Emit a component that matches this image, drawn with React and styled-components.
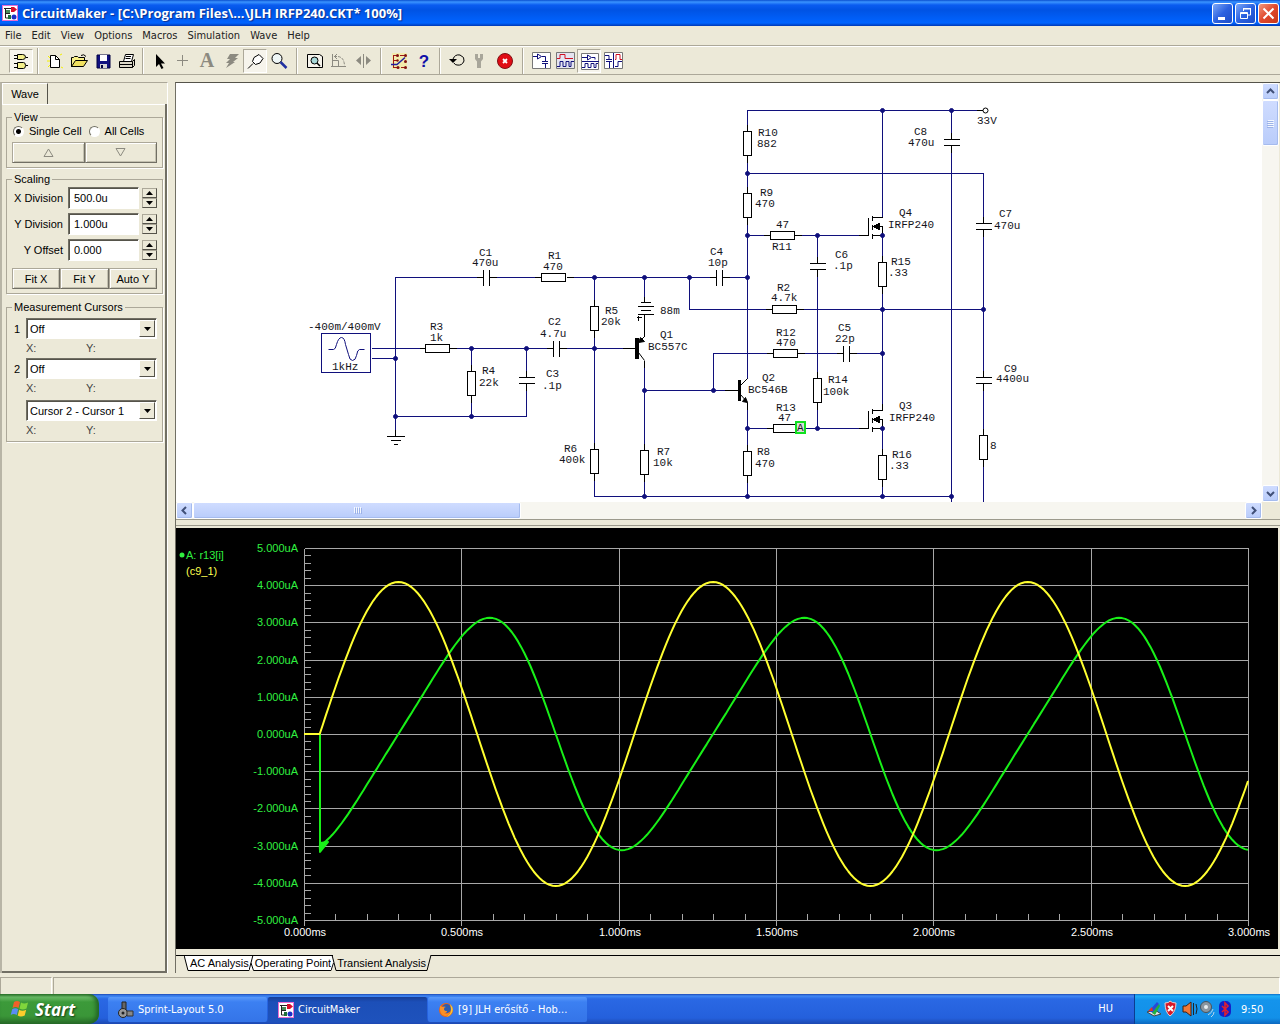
import React, { useState } from "react";
import styled, { createGlobalStyle, css } from "styled-components";

const GlobalStyle = createGlobalStyle`
  * {
    box-sizing: border-box;
  }
  body {
    margin: 0;
    background: #ece9d8;
    font-family: "Liberation Sans", Arial, sans-serif;
    font-size: 11px;
    color: #000;
  }
  button,
  input,
  select {
    font: inherit;
    color: inherit;
    margin: 0;
  }
`;

const NAVY = "#10107c";

/* ---------- logos ---------- */

const CircuitLogo = () => (
  <svg width="16" height="16" viewBox="0 0 16 16" aria-hidden="true">
    <rect width="16" height="16" fill="#e86cd0" />
    <rect x="1" y="1" width="14" height="14" fill="#fff" />
    <path d="M2 3.500h8M3.500 3v10h3M4 8.500h4" stroke="#222" fill="none" />
    <path d="M4 5h4v3H4z" fill="#4a8a5a" />
    <path d="M9 2h3l3 2.500L12 7H9z" fill="#d8102c" />
    <circle cx="12" cy="12" r="2.500" fill="#1a30c8" />
    <path d="M6 10h3v4H6z" fill="#1d7038" />
  </svg>
);

const WindowsFlag = () => (
  <svg width="20" height="20" viewBox="0 0 20 20" aria-hidden="true">
    <path d="M4 3q3-2 6 0L8.500 9q-3-2-6 0z" fill="#f2602a" />
    <path d="M11 3.500q3 2 7 0L16.500 9.500q-4 2-7 0z" fill="#7fd63c" />
    <path d="M2.200 10.200q3-2 6 0L6.700 16q-3-2-6 0z" fill="#5a8cf5" />
    <path d="M9.200 10.700q3 2 7 0L14.700 16.500q-4 2-7 0z" fill="#fccd2c" />
  </svg>
);

const SprintLogo = () => (
  <svg width="16" height="18" viewBox="0 0 16 18" aria-hidden="true">
    <path d="M4 1h4v9H4z" fill="#666" stroke="#222" />
    <circle cx="5" cy="12" r="4.500" fill="#999" stroke="#222" />
    <circle cx="5" cy="12" r="1.500" fill="#222" />
    <path d="M9 10h6v5H9z" fill="#888" stroke="#333" />
  </svg>
);

const FoxLogo = () => (
  <svg width="16" height="16" viewBox="0 0 16 16" aria-hidden="true">
    <circle cx="8" cy="8" r="7" fill="#e8641a" />
    <circle cx="8.500" cy="6.500" r="4.500" fill="#2c5cb0" />
    <path d="M2 4q1 0 2 1 2-1 4 0-2 0-2 2 0 2 3 2 0 2-3 2 3 2 6-1-1 4-5 4-6-1-5-10z" fill="#f89028" />
    <path d="M12 2q5 5 1 10-2 3-5 3 5-3 5-7 0-3-1-6z" fill="#f8c838" />
  </svg>
);

/* ---------- title bar ---------- */

const TitleBar = styled.header`
  display: flex;
  align-items: center;
  height: 26px;
  padding: 0 1px 0 2px;
  gap: 4px;
  background: linear-gradient(#0a4fd0 0, #3a94ff 2px, #0a5cf0 5px, #0053e4 10px, #0060fa 20px, #0064ff 23px, #0038b4 26px);
`;

const TitleText = styled.h1`
  flex: 1;
  margin: 0;
  color: #fff;
  font-family: "Open Sans", sans-serif;
  font-size: 13px;
  font-weight: 700;
  white-space: nowrap;
  text-shadow: 1px 1px 1px #10308c;
`;

const WindowButtons = styled.div`
  display: flex;
  gap: 2px;
`;

const WindowButton = styled.button`
  display: flex;
  width: 21px;
  height: 21px;
  padding: 0;
  border: 1px solid #fff;
  border-radius: 3px;
  background: ${({ $close }) =>
    $close
      ? "linear-gradient(135deg, #f0987c, #e0482c 50%, #c8381a)"
      : "linear-gradient(135deg, #7ca8f8, #2c62e0 50%, #1c4cc8)"};
`;

/* ---------- menu ---------- */

const MenuBar = styled.nav`
  display: flex;
  align-items: center;
  gap: 10px;
  height: 20px;
  padding: 0 5px 1px;
  border-bottom: 1px solid #aca899;
`;

const MenuItem = styled.a`
  color: #222;
  text-decoration: none;
  font-family: "DejaVu Sans Condensed", "DejaVu Sans", sans-serif;
  font-size: 11px;
`;

const menus = ["File", "Edit", "View", "Options", "Macros", "Simulation", "Wave", "Help"];

/* ---------- tool bar ---------- */

const ToolBar = styled.div`
  display: flex;
  align-items: center;
  height: 29px;
  padding: 0 9px;
  border-top: 1px solid #fff;
  border-bottom: 1px solid #aca899;
`;

const ToolButton = styled.button`
  width: 24px;
  height: 24px;
  padding: 0;
  border: 1px solid transparent;
  background: none;
  ${({ $pressed }) =>
    $pressed &&
    css`
      border-color: #aca899 #fff #fff #aca899;
      background: #f6f4ec;
    `}
  svg {
    display: block;
    overflow: visible;
  }
`;

const Separator = styled.span`
  width: 2px;
  height: 26px;
  margin: 0 ${({ $space }) => $space}px;
  border-left: 1px solid #aca899;
  border-right: 1px solid #fff;
`;

const toolGroups = [
  {
    space: 4,
    tools: [
      {
        name: "Parts",
        pressed: true,
        art: (
          <g fill="#f4f08c" stroke="#000">
            <path d="M7.500 4.500h5q3 0 3 2.500t-3 2.500h-5z" />
            <path d="M4 5.500h3M4 8.500h3M16 7.500h2M4 13.500h3M4 17.500h3M16 15.500h2" />
            <path d="M7.500 12.500h6q2 0 2 3t-2 3h-6z" />
          </g>
        ),
      },
    ],
  },
  {
    space: 3,
    tools: [
      {
        name: "New",
        art: (
          <g>
            <path d="M4 6l2 2M3 11h3M4 17l2-2M16 5l2-1M17 17l2 1" stroke="#f4f000" />
            <path d="M6.500 5.500h5l4 4v8h-9z" fill="#fff" stroke="#000" />
            <path d="M11.500 5.500v4h4" fill="none" stroke="#000" />
          </g>
        ),
      },
      {
        name: "Open",
        art: (
          <g stroke="#000">
            <path d="M3.500 17V7.500h2l1-1h3l1 1h6v3" fill="#f8f088" />
            <path d="M3.500 16.500l4-6h12l-4 6z" fill="#f0e060" />
            <path d="M13 5.500q3-2 5 1" fill="none" />
          </g>
        ),
      },
      {
        name: "Save",
        art: (
          <g>
            <path d="M5 5h13v13H5z" fill="#101080" stroke="#000040" />
            <path d="M8 5h7v6H8z" fill="#fff" />
            <path d="M8 14h7v4H8z" fill="#d4d4d4" />
            <path d="M9 15h2v3H9z" fill="#000040" />
          </g>
        ),
      },
      {
        name: "Print",
        art: (
          <g stroke="#000" fill="#fff">
            <path d="M7.500 11.500l2-7h8l-2 7z" />
            <path d="M10 6.500h5M9.500 8.500h5" />
            <path d="M3.500 11.500h13l2-2v6l-2 2h-13z" fill="#dedaca" />
            <path d="M3.500 14.500h13M16.500 11.500v6" />
          </g>
        ),
      },
    ],
  },
  {
    space: 5,
    tools: [
      { name: "Arrow", art: <path d="M8 4v13l3-3 2.500 5 2-1-2.500-4.500h4z" fill="#000" /> },
      { name: "Wire", art: <path d="M10.500 5v11M5 10.500h11" stroke="#8c8a80" /> },
      {
        name: "Text",
        art: (
          <text x="11" y="17" textAnchor="middle" fontFamily="Liberation Serif, serif" fontSize="20" fontWeight="700" fill="#8c8a80">
            A
          </text>
        ),
      },
      { name: "Delete", art: <path d="M10 4h9l-4 4h3l-5 4h2l-9 6 3-5H6l4-4H7z" fill="#8c8a80" /> },
      {
        name: "Probe",
        pressed: true,
        art: <path d="M4 18.500l5-5M8.500 11.500l3 3 4.500-1.500 3-4.500-4-4-5 3z" fill="#fff" stroke="#000" />,
      },
      {
        name: "Zoom",
        art: (
          <g>
            <circle cx="9" cy="8.500" r="5" fill="#eef6f6" stroke="#000" />
            <path d="M12.500 12l6 6" stroke="#2030a0" strokeWidth="2.500" />
          </g>
        ),
      },
    ],
  },
  {
    space: 5,
    tools: [
      {
        name: "Fit to window",
        art: (
          <g stroke="#000" fill="none">
            <path d="M3.500 4.500h12l3 2v11h-15z" fill="#f6f4ec" />
            <circle cx="10.500" cy="10.500" r="3.500" fill="#a8d8d8" />
            <path d="M13 13l3 3" strokeWidth="1.500" />
          </g>
        ),
      },
      {
        name: "Rotate",
        art: (
          <g stroke="#8c8a80" fill="none">
            <path d="M4.500 4v13M3 16.500h15" />
            <path d="M5 10.500h5.500V16" />
            <path d="M6 6.500h3q7 0 7.500 9" strokeDasharray="3 1" />
            <path d="M9 4L6.500 6.500 9 9" />
          </g>
        ),
      },
      {
        name: "Mirror",
        art: (
          <g fill="#8c8a80">
            <path d="M9 6v9l-5-4.500zM14 6v9l5-4.500z" />
            <path d="M11 4h1v14h-1z" />
          </g>
        ),
      },
    ],
  },
  {
    space: 4,
    tools: [
      {
        name: "Trace",
        art: (
          <g>
            <path d="M4 3h15v16H4z" fill="#f8ec90" opacity=".6" />
            <path d="M5.500 6v11M5 5.500h5M12 5.500h5M5 10.500h4M5 17.500h5M13 17.500h4" stroke="#a01818" fill="none" />
            <path d="M3 14.500h6l8-7" stroke="#2020a0" strokeWidth="1.500" fill="none" />
            <g fill="#801010">
              <circle cx="9.500" cy="5.500" r="1.500" />
              <circle cx="17.500" cy="5.500" r="1.500" />
              <circle cx="9.500" cy="10.500" r="1.200" />
              <circle cx="17.500" cy="11.500" r="1.500" />
              <circle cx="10" cy="17.500" r="1.500" />
              <circle cx="17.500" cy="17.500" r="1.500" />
            </g>
          </g>
        ),
      },
      {
        name: "Help",
        art: (
          <text x="12" y="17" textAnchor="middle" fontFamily="Liberation Sans, sans-serif" fontSize="17" fontWeight="700" fill="#1010a8">
            ?
          </text>
        ),
      },
    ],
  },
  {
    space: 5,
    tools: [
      {
        name: "Reset",
        art: (
          <g>
            <path d="M7 9q2-5 7-4 5 2 4 6-2 5-7 4-2 0-3-2" fill="none" stroke="#000" />
            <path d="M3 9h8l-4 4z" fill="#000" />
          </g>
        ),
      },
      {
        name: "Setup",
        art: <path d="M5 4h3v4h2V4h3v5l-2 2.500V18H7v-6.500L5 9z" fill="#a8a69a" />,
      },
      {
        name: "Stop",
        art: (
          <g>
            <circle cx="11" cy="11" r="7.500" fill="#e00c14" stroke="#801014" />
            <path d="M9 9l4 4M13 9l-4 4" stroke="#fff" strokeWidth="1.800" />
          </g>
        ),
      },
    ],
  },
  {
    tools: [
      {
        name: "Schematic",
        art: (
          <g fill="none" stroke={NAVY}>
            <path d="M2.500 2.500h18v16h-18z" fill="#fff" stroke="#777" />
            <path d="M3 6.500h4M7.500 4v5l4-2.500zM12 6.500h3.500V11M12 11.500h6M12 13.500h6M15.500 14v4" />
          </g>
        ),
      },
      {
        name: "Waveforms",
        art: (
          <g fill="none" stroke={NAVY}>
            <path d="M2.500 2.500h18v16h-18z" fill="#e4e4f0" stroke="#777" />
            <path d="M3 8.500h3v-4h5v4h8" stroke="#d01020" />
            <path d="M3 16.500h3v-5h3v5h3v-5h3v5h2v-5h3" />
          </g>
        ),
      },
      {
        name: "Split horizontal",
        pressed: true,
        art: (
          <g fill="none" stroke={NAVY}>
            <path d="M3.500 3.500h17v16h-17z" fill="#fff" stroke="#777" />
            <path d="M4 7.500h5M9.500 5v5l4-2.500zM14 7.500h3v2M4 11.500h17" />
            <path d="M4 17.500h3v-4h3v4h3v-4h3v4h2v-4h2" />
          </g>
        ),
      },
      {
        name: "Split vertical",
        art: (
          <g fill="none" stroke={NAVY}>
            <path d="M2.500 2.500h18v16h-18z" fill="#fff" stroke="#777" />
            <path d="M3 5.500h4V9M4 9.500h6M4 11.500h6M7.500 12v6M11.500 3v15" />
            <path d="M13 9.500h1v-5h4v5h2" stroke="#d01020" />
            <path d="M13 16.500h3v-5h4" />
          </g>
        ),
      },
    ],
  },
];

/* ---------- side panel ---------- */

const Workspace = styled.div`
  flex: 1;
  display: grid;
  grid-template-columns: 168px minmax(0, 1fr);
  column-gap: 7px;
  margin-top: 7px;
`;

const Sidebar = styled.aside`
  display: flex;
  flex-direction: column;
  border-top: 1px solid #aca899;
  border-left: 2px solid #b8b5a6;
  border-right: 1px solid #fff;
`;

const WaveTab = styled.button`
  width: 46px;
  height: 21px;
  padding: 0;
  border: 1px solid #fff;
  border-right: 1px solid #55534a;
  border-bottom: 0;
  background: none;
`;

const Panel = styled.div`
  flex: 1;
  padding: 6px 2px 6px 4px;
  border-right: 2px solid #716f64;
  border-bottom: 2px solid #716f64;
  box-shadow: inset 0 1px 0 #fff;
`;

const Group = styled.fieldset`
  min-width: 0;
  margin: 0 0 ${({ $after }) => $after}px;
  padding: ${({ $top }) => $top}px 5px 4px;
  border: 1px solid #aca899;
  box-shadow: 1px 1px 0 #fff;
  legend {
    height: 14px;
    padding: 0 2px;
    line-height: 14px;
  }
`;

const RadioRow = styled.div`
  display: flex;
  gap: 7px;
  height: 14px;
  padding-left: 1px;
  margin-bottom: 4px;
`;

const RadioLabel = styled.label`
  display: flex;
  align-items: center;
  gap: 5px;
  white-space: nowrap;
  input {
    appearance: none;
    width: 11px;
    height: 11px;
    border: 1px solid;
    border-color: #716f64 #fff #fff #716f64;
    border-radius: 50%;
    background: #fff;
  }
  input:checked {
    background: radial-gradient(circle, #000 2px, #fff 3px);
  }
`;

const ButtonRow = styled.div`
  display: flex;
`;

const PushButton = styled.button`
  flex: 1;
  display: flex;
  align-items: center;
  justify-content: center;
  height: 21px;
  padding: 0;
  white-space: nowrap;
  border: 1px solid;
  border-color: #aca899 #716f64 #716f64 #aca899;
  background: #ece9d8;
  box-shadow: inset 1px 1px 0 #fff, inset -1px -1px 0 #c4c1b0;
`;

const FieldRow = styled.div`
  display: grid;
  grid-template-columns: 1fr 71px 15px;
  align-items: center;
  column-gap: 3px;
  height: 22px;
  margin-bottom: 4px;
  label {
    padding-right: 2px;
    text-align: right;
    white-space: nowrap;
  }
`;

const sunken = css`
  border: 1px solid;
  border-color: #716f64 #fff #fff #716f64;
  box-shadow: inset 1px 1px 0 #55534a;
  background: #fff;
`;

const TextBox = styled.input`
  ${sunken}
  width: 100%;
  height: 22px;
  padding: 0 5px;
  border-radius: 0;
`;

const Spinner = styled.div`
  display: flex;
  flex-direction: column;
`;

const SpinButton = styled.button`
  display: flex;
  align-items: center;
  justify-content: center;
  height: 10px;
  padding: 0;
  border: 1px solid;
  border-color: #aca899 #55534a #55534a #aca899;
  background: #ece9d8;
`;

const FitRow = styled(ButtonRow)`
  margin-top: 7px;
`;

const CursorRow = styled.div`
  display: grid;
  grid-template-columns: 14px 1fr;
  align-items: center;
  label {
    padding-left: 2px;
  }
`;

const ComboBox = styled.div`
  ${sunken}
  grid-column: 2;
  display: flex;
  height: 21px;
  padding: 1px;
  select {
    flex: 1;
    min-width: 0;
    padding: 0 2px;
    border: 0;
    appearance: none;
    background: #fff;
  }
`;

const ComboArrow = styled.span`
  display: flex;
  align-items: center;
  justify-content: center;
  width: 16px;
  border: 1px solid;
  border-color: #fff #55534a #55534a #fff;
  background: #ece9d8;
  pointer-events: none;
`;

const Readout = styled.div`
  display: grid;
  grid-template-columns: 60px 1fr;
  height: ${({ $height }) => $height}px;
  padding-left: 14px;
  line-height: 18px;
  color: #444;
`;

const Triangle = ({ down, small }) => (
  <svg width={small ? 7 : 11} height={small ? 4 : 9} viewBox={small ? "0 0 7 4" : "0 0 11 9"} aria-hidden="true">
    {small ? (
      <path d={down ? "M0 0h7L3.500 4z" : "M0 4h7L3.500 0z"} fill="#000" />
    ) : (
      <path d={down ? "M1 .500h9L5.500 8z" : "M1 8.500h9L5.500 1z"} fill="none" stroke="#8c8a80" />
    )}
  </svg>
);

const NumberField = ({ id, label, initial }) => (
  <FieldRow>
    <label htmlFor={id}>{label}</label>
    <TextBox id={id} defaultValue={initial} />
    <Spinner>
      <SpinButton aria-label={`${label} up`}>
        <Triangle small />
      </SpinButton>
      <SpinButton aria-label={`${label} down`}>
        <Triangle small down />
      </SpinButton>
    </Spinner>
  </FieldRow>
);

const CursorField = ({ id, label, value, height }) => (
  <>
    <CursorRow>
      {label && <label htmlFor={id}>{label}</label>}
      <ComboBox>
        <select id={id} aria-label={label ? undefined : "Cursor difference"}>
          <option>{value}</option>
        </select>
        <ComboArrow>
          <Triangle small down />
        </ComboArrow>
      </ComboBox>
    </CursorRow>
    <Readout $height={height}>
      <span>X:</span>
      <span>Y:</span>
    </Readout>
  </>
);

const SidePanel = () => {
  const [cells, setCells] = useState("single");
  return (
    <Sidebar>
      <WaveTab>Wave</WaveTab>
      <Panel>
        <Group $after={4} $top={0}>
          <legend>View</legend>
          <RadioRow>
            <RadioLabel>
              <input type="radio" name="cells" checked={cells === "single"} onChange={() => setCells("single")} />
              Single Cell
            </RadioLabel>
            <RadioLabel>
              <input type="radio" name="cells" checked={cells === "all"} onChange={() => setCells("all")} />
              All Cells
            </RadioLabel>
          </RadioRow>
          <ButtonRow>
            <PushButton aria-label="Previous cell">
              <Triangle />
            </PushButton>
            <PushButton aria-label="Next cell">
              <Triangle down />
            </PushButton>
          </ButtonRow>
        </Group>
        <Group $after={6} $top={1}>
          <legend>Scaling</legend>
          <NumberField id="xdiv" label="X Division" initial="500.0u" />
          <NumberField id="ydiv" label="Y Division" initial="1.000u" />
          <NumberField id="yoff" label="Y Offset" initial="0.000" />
          <FitRow>
            <PushButton>Fit X</PushButton>
            <PushButton>Fit Y</PushButton>
            <PushButton>Auto Y</PushButton>
          </FitRow>
        </Group>
        <Group $after={0} $top={4}>
          <legend>Measurement Cursors</legend>
          <CursorField id="cursor1" label="1" value="Off" height={19} />
          <CursorField id="cursor2" label="2" value="Off" height={21} />
          <CursorField id="diff" value="Cursor 2 - Cursor 1" height={16} />
        </Group>
      </Panel>
    </Sidebar>
  );
};

/* ---------- schematic ---------- */

const wires = [
  "M395 416V277H483M489 277H541M566 277H716M722 277H747",
  "M371 348H425M449 348H553M559 348H636M371 358H395M395 416V436M395 416H526V383M526 377V348",
  "M471 348V371M471 395V416M594 277V306M594 330V449M594 473V496H951",
  "M644 277V302M644 314V336M644 360V450M644 474V496M644 390H738M713 390V353H773",
  "M747 131V110H982M747 155V193M747 217V378M747 173H983V223M983 229V377M983 383V435M983 459V502",
  "M747 235H770M794 235H868M817 235V263M817 269V378M817 402V428",
  "M882 110V217M882 235V262M882 286V410M882 428V455M882 479V496",
  "M951 110V139M951 145V502M689 277V309H772M796 309H983",
  "M797 353H843M849 353H882M747 402V451M747 475V496M747 428H773M797 428H868",
];

const leads = [
  "M476 277H483M489 277H496M534 277H541M566 277H573M419 348H425M449 348H456M546 348H553M559 348H566",
  "M594 299V306M594 330V337M644 296V302M644 314V336M471 364V371M471 395V402M526 370V377M526 383V390",
  "M622 348H636M594 442V449M594 473V480M644 443V450M644 474V481M644 360V367M747 124V131M747 155V162",
  "M747 186V193M747 217V224M763 235H770M794 235H801M817 256V263M817 269V276M858 235H868M882 255V262",
  "M882 286V293M951 132V139M951 145V152M983 216V223M983 229V236M709 277H716M722 277H729M976 110H982",
  "M765 309H772M796 309H803M766 353H773M797 353H804M836 353H843M849 353H856M724 390H738M817 371V378",
  "M817 402V409M858 428H868M882 448V455M882 479V486M983 370V377M983 383V390M983 428V435M983 459V466",
  "M766 428H773M747 444V451M747 475V482M747 402V409M882 403V410M395 429V436",
];

const resistors = [
  [541, 273, 1], [425, 344, 1], [770, 231, 1], [772, 305, 1], [773, 349, 1], [773, 424, 1],
  [590, 306], [467, 371], [590, 449], [640, 450], [743, 131], [743, 193], [878, 262],
  [813, 378], [743, 451], [878, 455], [979, 435],
];

// centre of each capacitor; the last flag turns the plates upright
const capacitors = [
  [486, 277, 1], [556, 348, 1], [719, 277, 1], [846, 353, 1],
  [526, 380], [817, 266], [951, 142], [983, 226], [983, 380],
];

const junctions = [
  [594, 277], [644, 277], [689, 277], [747, 277], [471, 348], [526, 348], [594, 348], [395, 358],
  [395, 416], [471, 416], [644, 390], [713, 390], [644, 496], [747, 496], [882, 496], [951, 496],
  [747, 428], [817, 428], [882, 428], [882, 353], [882, 309], [983, 309], [882, 235], [817, 235],
  [747, 235], [747, 173], [882, 110], [951, 110],
];

const partLabels = [
  [479, 256, "C1"], [472, 266, "470u"], [548, 259, "R1"], [543, 270, "470"], [605, 314, "R5"],
  [601, 325, "20k"], [548, 325, "C2"], [540, 337, "4.7u"], [430, 330, "R3"], [430, 341, "1k"],
  [482, 374, "R4"], [479, 386, "22k"], [546, 377, "C3"], [542, 389, ".1p"], [308, 330, "-400m/400mV"],
  [332, 370, "1kHz"], [564, 452, "R6"], [559, 463, "400k"], [660, 314, "88m"], [660, 338, "Q1"],
  [648, 350, "BC557C"], [657, 455, "R7"], [653, 466, "10k"], [758, 136, "R10"], [757, 147, "882"],
  [760, 196, "R9"], [755, 207, "470"], [776, 228, "47"], [772, 250, "R11"], [710, 255, "C4"],
  [708, 266, "10p"], [835, 258, "C6"], [833, 269, ".1p"], [899, 216, "Q4"], [888, 228, "IRFP240"],
  [891, 265, "R15"], [888, 276, ".33"], [914, 135, "C8"], [908, 146, "470u"], [977, 124, "33V"],
  [999, 217, "C7"], [994, 229, "470u"], [777, 291, "R2"], [771, 301, "4.7k"], [776, 336, "R12"],
  [776, 346, "470"], [838, 331, "C5"], [835, 342, "22p"], [762, 381, "Q2"], [748, 393, "BC546B"],
  [828, 383, "R14"], [823, 395, "100k"], [776, 411, "R13"], [778, 421, "47"], [899, 409, "Q3"],
  [889, 421, "IRFP240"], [757, 455, "R8"], [755, 467, "470"], [892, 458, "R16"], [889, 469, ".33"],
  [1004, 372, "C9"], [996, 382, "4400u"], [990, 449, "8"],
];

const Mosfet = ({ y }) => (
  <g stroke="#000" fill="none">
    <path d={`M868 ${y}v-18M872 ${y - 20}v5M872 ${y - 11}v5M872 ${y - 2}v5M872 ${y - 18}h10M872 ${y - 9}h10v9h-10`} />
    <path d={`M873 ${y - 9}l6-3v6z`} fill="#000" />
  </g>
);

const CircuitView = styled.svg`
  display: block;
  width: 100%;
  height: 419px;
  background: #fff;
`;

const Schematic = () => (
  <CircuitView role="img" aria-label="Amplifier schematic">
    <g transform="translate(-175.5 -82.5)" fill="none" strokeWidth="1" shapeRendering="crispEdges">
      <path d={wires.join("")} stroke={NAVY} />
      <path d={leads.join("")} stroke="#000" />
      {resistors.map(([x, y, flat]) => (
        <rect key={`${x}-${y}`} x={x} y={y} width={flat ? 24 : 8} height={flat ? 8 : 24} fill="#fff" stroke="#000" />
      ))}
      {capacitors.map(([x, y, upright]) => (
        <path
          key={`${x}-${y}`}
          stroke="#000"
          d={upright ? `M${x - 3} ${y - 8}v16M${x + 3} ${y - 8}v16` : `M${x - 8} ${y - 3}h16M${x - 8} ${y + 3}h16`}
        />
      ))}
      <path stroke="#000" d="M386 436h18M390 440h10M393 444h4M640 302h10M637 306h16M640 310h10M637 314h16M636 317h5M638 315v5" />
      <rect x="321" y="333" width="49" height="39" stroke={NAVY} />
      <path
        stroke={NAVY}
        shapeRendering="auto"
        d="M328 349h5q2 0 3-5 2-7 5-7t4 7l3 10q1 6 4 6t4-5q1-6 3-6h5"
      />
      <g stroke="#000" shapeRendering="auto">
        <path d="M637 343l7-7M638 352l6 8M740 385l7-7M740 394l7 8" />
        <path d="M638 342l2-5 4 4z" fill="#000" />
        <path d="M747 402l-5-1 3-4z" fill="#000" />
      </g>
      <path d="M635 338h3v20h-3zM738 380h2v20h-2z" fill="#000" stroke="#000" />
      <Mosfet y={235} />
      <Mosfet y={428} />
      {junctions.map(([x, y]) => (
        <circle key={`${x}-${y}`} cx={x} cy={y} r="2" fill={NAVY} stroke={NAVY} shapeRendering="auto" />
      ))}
      <circle cx="985" cy="110" r="2.500" fill="#fff" stroke="#000" shapeRendering="auto" />
      <rect x="795" y="421" width="9" height="11" fill="#d8dcd8" stroke="#10e020" strokeWidth="2" />
    </g>
    <g transform="translate(-176 -83)" fontFamily="Liberation Mono, monospace" fontSize="11" fill="#15151c">
      {partLabels.map(([x, y, text]) => (
        <text key={`${x}-${y}`} x={x} y={y}>
          {text}
        </text>
      ))}
      <text x="797" y="431">
        A
      </text>
    </g>
  </CircuitView>
);

/* ---------- scroll bars ---------- */

const CircuitPane = styled.div`
  display: grid;
  grid-template-columns: minmax(0, 1fr) 17px;
  padding-right: 1px;
`;

const ScrollTrack = styled.div`
  display: flex;
  flex-direction: ${({ $vertical }) => ($vertical ? "column" : "row")};
  justify-content: space-between;
  background: #f7f6f0;
`;

const scrollFace = css`
  display: flex;
  align-items: center;
  justify-content: center;
  padding: 0;
  border: 1px solid #fff;
  border-radius: 2px;
  background: linear-gradient(#cfdcff, #b9ccfa);
  box-shadow: inset -1px -1px 0 #a5bbee;
`;

const ScrollButton = styled.button`
  ${scrollFace}
  flex: none;
  width: 17px;
  height: 17px;
`;

const ScrollThumb = styled.div`
  ${scrollFace}
  ${({ $vertical }) => ($vertical ? "height: 46px;" : "width: 30.7%;")}
`;

const ScrollStart = styled.div`
  flex: 1;
  display: flex;
  flex-direction: ${({ $vertical }) => ($vertical ? "column" : "row")};
`;

const Chevron = ({ d }) => (
  <svg width="9" height="9" viewBox="0 0 9 9" aria-hidden="true">
    <path d={d} fill="none" stroke="#405078" strokeWidth="2" />
  </svg>
);

const Grip = ({ vertical }) => (
  <svg width="9" height="9" viewBox="0 0 9 9" aria-hidden="true" shapeRendering="crispEdges">
    <g transform={vertical ? "rotate(90 4.5 4.5)" : undefined}>
      <path d="M1.500 1v6M3.500 1v6M5.500 1v6M7.500 1v6" stroke="#f4f8ff" />
      <path d="M2.500 2v6M4.500 2v6M6.500 2v6M8.500 2v6" stroke="#9cb2e8" />
    </g>
  </svg>
);

/* ---------- wave plot ---------- */

const MainPane = styled.main`
  min-width: 0;
  border-top: 1px solid #55534a;
  border-left: 1px solid #716f64;
`;

const Splitter = styled.div`
  height: 7px;
  margin-bottom: 2px;
  border-top: 1px solid #9c9a8c;
  border-bottom: 1px solid #9c9a8c;
`;

const ScopeFrame = styled.div`
  padding-right: 2px;
  margin-bottom: 6px;
  svg {
    display: block;
    width: 100%;
    height: auto;
    background: #000;
  }
`;

const plot = { left: 128, right: 1072, top: 20, bottom: 392, zero: 206 };
const perMs = (plot.right - plot.left) / 3;
const perUnit = (plot.bottom - plot.top) / 10;

const sample = (fn) => {
  const points = [];
  for (let t = 0.05; t < 3.0001; t += 0.01) {
    points.push(`${(plot.left + t * perMs).toFixed(1)} ${(plot.zero - fn(t)).toFixed(1)}`);
  }
  return points.join("L");
};

const voltage = sample((t) => 152 * Math.sin(2 * Math.PI * (t - 0.05)));
const current = sample((t) => {
  const phase = 2 * Math.PI * (t - 0.3);
  return 112 * Math.sin(phase) - 16 * Math.sin(2 * phase);
});

const range = (n) => Array.from({ length: n }, (_, i) => i);

const Scope = () => {
  const yLines = range(11).map((i) => Math.round(plot.top + i * perUnit));
  const xLines = range(7).map((i) => Math.round(plot.left + (i * perMs) / 2));
  return (
    <svg viewBox="0 0 1102 421" role="img" aria-label="Transient analysis">
      <g transform="translate(.5 .5)" stroke="#a8a8a8" shapeRendering="crispEdges">
        <path d={yLines.map((y) => `M${plot.left} ${y}H${plot.right}`).join("")} />
        <path d={xLines.map((x) => `M${x} ${plot.top}V${plot.bottom + 5}`).join("")} />
        <path d={range(51).map((i) => `M${plot.left} ${Math.round(plot.top + (i * perUnit) / 5)}h6`).join("")} />
        <path d={range(31).map((i) => `M${Math.round(plot.left + (i * perMs) / 10)} ${plot.bottom}v-7`).join("")} />
      </g>
      <g fill="none" strokeWidth="2" strokeLinejoin="round">
        <path d={`M${plot.left} ${plot.zero}H144V322L${current}`} stroke="#18f018" />
        <path d="M144 315v9l8-10z" fill="#18f018" stroke="#18f018" />
        <path d={`M${plot.left} ${plot.zero}L${voltage}`} stroke="#ffff30" />
      </g>
      <g fontFamily="Liberation Sans, Arial, sans-serif" fontSize="11">
        <g fill="#30f040" textAnchor="end">
          {yLines.map((y, i) => (
            <text key={y} x="122" y={y + 4}>
              {(5 - i).toFixed(3)}uA
            </text>
          ))}
        </g>
        <g fill="#fff" textAnchor="middle">
          {xLines.map((x, i) => (
            <text key={x} x={x + 1} y="408">
              {(i / 2).toFixed(3)}ms
            </text>
          ))}
        </g>
        <circle cx="6" cy="27" r="2.500" fill="#30f040" />
        <text x="10" y="31" fill="#30f040">
          A: r13[i]
        </text>
        <text x="10" y="47" fill="#ffff50">
          (c9_1)
        </text>
      </g>
    </svg>
  );
};

/* ---------- analysis tabs ---------- */

const SheetTabs = styled.div`
  display: flex;
  height: 16px;
  svg {
    flex: none;
  }
`;

const SheetFill = styled.span`
  flex: ${({ $grow }) => ($grow ? "1" : "0 0 8px")};
  border-top: 1px solid #000;
`;

const SheetTab = styled.button`
  padding: 0;
  border: 0;
  border-top: 1px solid ${({ $active }) => ($active ? "transparent" : "#000")};
  border-bottom: 1px solid #000;
  background: ${({ $active }) => ($active ? "#ece9d8" : "#fff")};
  background-clip: padding-box;
  line-height: 14px;
  white-space: nowrap;
`;

const TabEdge = ({ d, fill, top }) => (
  <svg width="6" height="16" viewBox="0 0 6 16" aria-hidden="true">
    {fill && <path d={fill} fill="#fff" />}
    <path d={d} stroke="#000" fill="none" />
    <path d={top} stroke="#000" />
  </svg>
);

/* ---------- status + task bar ---------- */

const StatusBar = styled.footer`
  display: grid;
  grid-template-columns: 52px 1fr;
  gap: 1px;
  height: 17px;
  margin-top: 4px;
  span {
    border-top: 1px solid #aca899;
    border-left: 1px solid #aca899;
    border-right: 1px solid #fff;
  }
`;

const TaskBar = styled.div`
  display: flex;
  align-items: stretch;
  height: 30px;
  background: linear-gradient(#1c48b4 0, #4088f4 2px, #2a68e4 5px, #2460dc 24px, #1c48b0 30px);
  color: #fff;
  font-family: "DejaVu Sans Condensed", "DejaVu Sans", sans-serif;
  font-size: 11px;
`;

const StartButton = styled.button`
  display: flex;
  align-items: center;
  gap: 5px;
  width: 99px;
  padding: 0 0 0 10px;
  margin-right: 9px;
  border: 0;
  border-radius: 0 10px 10px 0;
  background: linear-gradient(#2e7a2c 0, #6cbc68 3px, #3c9a3a 8px, #3a9638 22px, #286c28 30px);
  box-shadow: inset -3px 0 4px #226426;
  color: #fff;
  font-family: "Open Sans", sans-serif;
  font-size: 17px;
  font-weight: 700;
  font-style: italic;
  text-shadow: 1px 1px 2px #123c12;
`;

const TaskButton = styled.button`
  display: flex;
  align-items: center;
  gap: 4px;
  width: 159px;
  height: 25px;
  margin: 3px 1px 0 0;
  padding: 0 0 0 10px;
  border: 0;
  border-radius: 2px;
  color: #fff;
  white-space: nowrap;
  background: ${({ $active }) =>
    $active ? "linear-gradient(#173e98, #1c4fb8 5px, #1e52bc)" : "linear-gradient(#5a9afa, #3c80f2 5px, #3474e8)"};
`;

const Language = styled.span`
  margin-left: auto;
  padding-right: 21px;
  line-height: 30px;
`;

const Tray = styled.div`
  display: flex;
  align-items: center;
  gap: 7px;
  width: 146px;
  padding-left: 11px;
  border-left: 1px solid #0c3c90;
  background: linear-gradient(#0c6cc8 0, #20b0f8 2px, #1494ec 6px, #1290e8 24px, #0c68c0 30px);
`;

const TrayIcons = () => (
  <svg width="88" height="18" viewBox="0 0 88 18" aria-hidden="true">
    <path d="M1 12l8-2 6 4-7 2z" fill="#e8e8e8" stroke="#444" />
    <path d="M3 11l8-9 2 2-6 9z" fill="#2848d8" />
    <path d="M6 13l7-9 1 2-5 9z" fill="#20b040" />
    <path d="M2 11l4-4 1 4z" fill="#e83020" />
    <path d="M19 3q4 0 5-2 2 2 6 2 0 9-6 13-5-4-5-13z" fill="#d81828" stroke="#e8d0d0" />
    <path d="M22 6l5 5M27 6l-5 5" stroke="#fff" strokeWidth="2" />
    <path d="M37 6h3l5-4v14l-5-4h-3z" fill="#f07838" stroke="#402010" />
    <path d="M47.500 3v12M50 4q2 5 0 10" stroke="#222" fill="none" />
    <circle cx="60" cy="7" r="5.500" fill="#8a96a0" stroke="#48545c" />
    <circle cx="60" cy="7" r="2" fill="#e8eef0" />
    <path d="M62 15q4-2 5-6M65 17q3-2 3-5" stroke="#b8d4e8" fill="none" />
    <rect x="73" y="1" width="12" height="16" rx="5" fill="#1420c8" />
    <path d="M76 6l6 6-3 3V3l3 3-6 6" stroke="#e02030" strokeWidth="1.600" fill="none" />
  </svg>
);

const Page = styled.div`
  display: flex;
  flex-direction: column;
  min-height: 100vh;
  background: #ece9d8;
`;

export default function App() {
  return (
    <Page>
      <GlobalStyle />
      <TitleBar>
        <CircuitLogo />
        <TitleText>{"CircuitMaker - [C:\\Program Files\\...\\JLH IRFP240.CKT* 100%]"}</TitleText>
        <WindowButtons>
          <WindowButton aria-label="Minimize">
            <svg width="19" height="19">
              <path d="M5 13h7v3H5z" fill="#fff" />
            </svg>
          </WindowButton>
          <WindowButton aria-label="Restore">
            <svg width="19" height="19" fill="none" stroke="#fff">
              <path d="M7.500 7V5h7v6H12M7 4.500h8" />
              <path d="M4.500 8.500h7v6h-7zM4 9.500h8" />
            </svg>
          </WindowButton>
          <WindowButton $close aria-label="Close">
            <svg width="19" height="19" stroke="#fff" strokeWidth="2">
              <path d="M4.500 4.500l10 10M14.500 4.500l-10 10" />
            </svg>
          </WindowButton>
        </WindowButtons>
      </TitleBar>

      <MenuBar>
        {menus.map((menu) => (
          <MenuItem key={menu} href="#">
            {menu}
          </MenuItem>
        ))}
      </MenuBar>

      <ToolBar>
        {toolGroups.map((group, index) => (
          <React.Fragment key={index}>
            {group.tools.map((tool) => (
              <ToolButton key={tool.name} aria-label={tool.name} $pressed={tool.pressed}>
                <svg width="22" height="22" viewBox="0 0 22 22">
                  {tool.art}
                </svg>
              </ToolButton>
            ))}
            {group.space && <Separator $space={group.space} />}
          </React.Fragment>
        ))}
      </ToolBar>

      <Workspace>
        <SidePanel />
        <MainPane>
          <CircuitPane>
            <Schematic />
            <ScrollTrack $vertical>
              <ScrollStart $vertical>
                <ScrollButton aria-label="Scroll up">
                  <Chevron d="M1 6l3.500-3.500L8 6" />
                </ScrollButton>
                <ScrollThumb $vertical>
                  <Grip vertical />
                </ScrollThumb>
              </ScrollStart>
              <ScrollButton aria-label="Scroll down">
                <Chevron d="M1 3l3.500 3.500L8 3" />
              </ScrollButton>
            </ScrollTrack>
            <ScrollTrack>
              <ScrollStart>
                <ScrollButton aria-label="Scroll left">
                  <Chevron d="M6 1L2.500 4.500 6 8" />
                </ScrollButton>
                <ScrollThumb>
                  <Grip />
                </ScrollThumb>
              </ScrollStart>
              <ScrollButton aria-label="Scroll right">
                <Chevron d="M3 1l3.500 3.500L3 8" />
              </ScrollButton>
            </ScrollTrack>
          </CircuitPane>
          <Splitter />
          <ScopeFrame>
            <Scope />
          </ScopeFrame>
          <SheetTabs>
            <SheetFill />
            <TabEdge d="M0 0l4 15.500h3" fill="M0 0h7v15H4z" top="M0 .5h7" />
            <SheetTab>AC Analysis</SheetTab>
            <TabEdge d="M0 15.500L4 0M2 8l2.500 7.500H6" fill="M0 0h6v15H0z" top="M0 .5h6" />
            <SheetTab>Operating Point</SheetTab>
            <TabEdge d="M1 0l4 15.500h1M0 15.500L2.500 8" fill="M0 0h1l2 9-2 6H0z" top="M0 .5h2" />
            <SheetTab $active>Transient Analysis</SheetTab>
            <TabEdge d="M0 15.500h1L5 0" top="M5 .5h1" />
            <SheetFill $grow />
          </SheetTabs>
        </MainPane>
      </Workspace>

      <StatusBar>
        <span />
        <span />
      </StatusBar>

      <TaskBar>
        <StartButton>
          <WindowsFlag />
          Start
        </StartButton>
        <TaskButton>
          <SprintLogo />
          Sprint-Layout 5.0
        </TaskButton>
        <TaskButton $active>
          <CircuitLogo />
          CircuitMaker
        </TaskButton>
        <TaskButton>
          <FoxLogo />
          [9] JLH erősítő - Hob...
        </TaskButton>
        <Language>HU</Language>
        <Tray>
          <TrayIcons />
          <time>9:50</time>
        </Tray>
      </TaskBar>
    </Page>
  );
}
